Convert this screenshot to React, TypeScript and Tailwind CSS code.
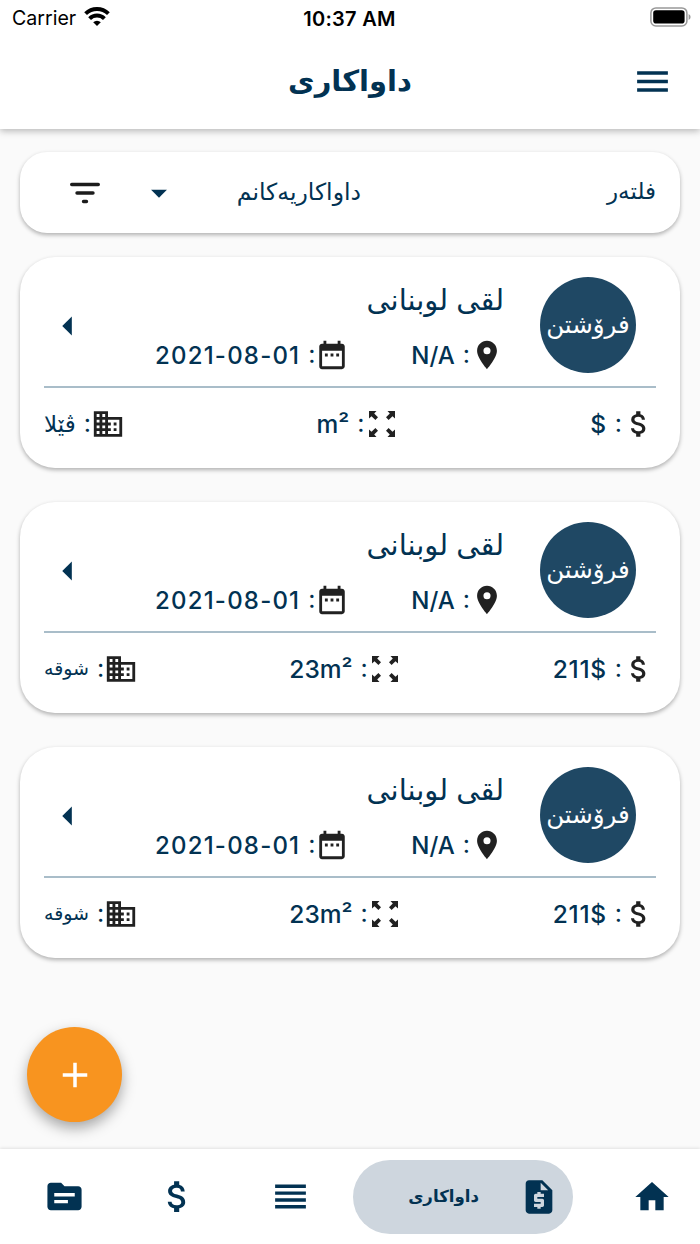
import clsx from 'clsx'
import {
    MdAdd,
    MdArrowDropDown,
    MdArrowLeft,
    MdAttachMoney,
    MdBusiness,
    MdDateRange,
    MdHome,
    MdLocationOn,
    MdMenu,
    MdReorder,
    MdRequestQuote,
    MdSource,
} from 'react-icons/md'

const requests = [
    { price: '$', area: 'm²', kind: 'ڤێلا', kindClass: 'text-[23px]' },
    { price: '211$', area: '23m²', kind: 'شوقە', kindClass: 'text-[19px]' },
    { price: '211$', area: '23m²', kind: 'شوقە', kindClass: 'text-[19px]' },
]

function StatusBar() {
    return (
        <div className="grid h-9 grid-cols-3 items-center pr-[9px] pl-3 text-[20px] text-black">
            <div className="flex items-center gap-2">
                <span className="pt-0.5 text-[19.6px]">Carrier</span>
                <svg viewBox="0 0 26 19" className="mb-[3px] h-[19px] w-[26px]" fill="none" stroke="currentColor" strokeWidth="4">
                    <path d="M1.6 6.6a16.5 16.5 0 0 1 22.8 0" />
                    <path d="M5.6 11.6a10.6 10.6 0 0 1 14.8 0" />
                    <path d="M13 19l-3.8-3.8a5.4 5.4 0 0 1 7.6 0z" fill="currentColor" stroke="none" />
                </svg>
            </div>
            <div className="pt-px pr-1 text-center font-semibold tracking-[0.3px]">10:37 AM</div>
            <svg viewBox="0 0 41 20" className="mb-0.5 h-5 w-[41px] justify-self-end">
                <rect x="0.9" y="0.9" width="36" height="18" rx="5" fill="none" stroke="#999" strokeWidth="1.5" />
                <rect x="3.2" y="3.2" width="31.4" height="13.4" rx="2.8" />
                <path d="M38.6 7v6q2-1 2-3t-2-3z" fill="#999" />
            </svg>
        </div>
    )
}

function ExpandIcon() {
    return (
        <svg viewBox="0 0 26 26" className="mx-1 size-[26px] text-[#212121]" fill="currentColor">
            <path d="M0 0h7.5L5.2 2.5 9 6.3 6.4 9 2.5 5.2 0 7.5z" />
            <path d="M26 0v7.5l-2.5-2.3L19.6 9 17 6.3l3.8-3.8L18.5 0z" />
            <path d="M0 26v-7.5l2.5 2.3L6.4 17 9 19.7l-3.8 3.8L7.5 26z" />
            <path d="M26 26h-7.5l2.3-2.5L17 19.700l2.600-2.700 3.900 3.800 2.500-2.300z" />
        </svg>
    )
}

function RequestCard({ price, area, kind, kindClass }: (typeof requests)[number]) {
    return (
        <article className="h-[211px] rounded-[35px] bg-white px-6 pt-5 shadow-[0_2px_4px_rgba(0,0,0,0.3)]">
            <div className="flex h-[109px]">
                <div className="mr-5 flex size-[96px] shrink-0 items-center justify-center rounded-full bg-[#1f4864] pb-0.5 text-[24.5px] text-white">
                    فرۆشتن
                </div>
                <div className="mr-9 flex w-[349px] flex-col">
                    <h2 className="h-[60px] text-[29px] leading-[46px]">لقی لوبنانی</h2>
                    <div className="flex h-9 items-center justify-between text-[25px]">
                        <div className="flex items-center">
                            <MdLocationOn className="size-[34px] text-[#212121]" />
                            <span>:</span>
                            <span dir="ltr" className="mt-0.5 mr-2 text-[24px] font-[450]">N/A</span>
                        </div>
                        <div className="flex items-center">
                            <MdDateRange className="size-[34px] text-[#212121]" />
                            <span>:</span>
                            <span dir="ltr" className="mt-0.5 mr-2 text-[24px] font-[450] tracking-[1.2px]">2021-08-01</span>
                        </div>
                    </div>
                </div>
                <MdArrowLeft className="mt-[26px] mr-auto ml-px size-[46px]" />
            </div>
            <div className="h-0.5 bg-[#a9bdc9]" />
            <div className="flex h-[72px] items-center justify-between text-[25px]">
                <div className="flex items-center">
                    <MdAttachMoney className="size-[34px] text-[#212121]" />
                    <span>:</span>
                    <span dir="ltr" className="mt-px mr-2 text-[24.5px] font-[450] tracking-[0.7px]">{price}</span>
                </div>
                <div className="flex items-center">
                    <ExpandIcon />
                    <span>:</span>
                    <span dir="ltr" className="mt-px mr-2 text-[24.5px] font-[450]">{area}</span>
                </div>
                <div className="flex items-center">
                    <MdBusiness className="size-[34px] text-[#212121]" />
                    <span>:</span>
                    <span className={clsx('mr-2', kindClass)}>{kind}</span>
                </div>
            </div>
        </article>
    )
}

export default function App() {
    return (
        <div dir="rtl" className="flex h-[1244px] w-[700px] flex-col overflow-hidden bg-[#fafafa] font-['Inter','DejaVu_Sans',sans-serif] text-[#023252]">
            <header className="z-10 h-[129px] shrink-0 bg-white shadow-[0_2px_7px_rgba(0,0,0,0.28)]">
                <div dir="ltr">
                    <StatusBar />
                </div>
                <div className="grid h-[91px] grid-cols-3 items-center px-[27px]">
                    <MdMenu className="size-[41px]" />
                    <h1 className="pb-0.5 text-center text-[29px] font-bold">داواکاری</h1>
                </div>
            </header>

            <main className="flex flex-1 flex-col px-5 pt-[23px]">
                <div className="flex h-[81px] shrink-0 items-center rounded-[27px] bg-white px-6 shadow-[0_2px_4px_rgba(0,0,0,0.3)]">
                    <span className="w-[295px] pb-0.5 text-[23px]">فلتەر</span>
                    <span className="w-[183px] pb-0.5 text-[23.5px]">داواکاریەکانم</span>
                    <MdArrowDropDown className="size-[38px]" />
                    <svg viewBox="0 0 30 22" className="mr-10 h-[22px] w-[30px]" fill="none" stroke="#1c1c1c" strokeWidth="3.4" strokeLinecap="round">
                        <path d="M1.7 2.5h26.6M7 11h16M13.5 19.5h3" />
                    </svg>
                </div>
                <div className="mt-6 flex flex-col gap-[34px]">
                    {requests.map((request, i) => (
                        <RequestCard key={i} {...request} />
                    ))}
                </div>
                <button className="mt-[69px] mr-auto ml-[7px] flex size-[95px] shrink-0 items-center justify-center rounded-full bg-[#f8941f] text-white shadow-[0_6px_14px_rgba(0,0,0,0.34)]">
                    <MdAdd className="size-[42px]" />
                </button>
            </main>

            <nav className="flex h-[95px] shrink-0 items-center bg-white shadow-[0_-1px_3px_rgba(0,0,0,0.1)]">
                <MdHome className="mr-7 size-10" />
                <div className="mr-[59px] flex h-[74px] w-[220px] items-center rounded-full bg-[#ced6de] pr-3.5">
                    <MdRequestQuote className="size-10" />
                    <span className="mr-10 text-[16.6px] font-bold">داواکاری</span>
                </div>
                <MdReorder className="mr-[42px] size-[41px]" />
                <MdAttachMoney className="mr-[72px] size-[41px]" />
                <MdSource className="mr-[72px] size-[41px]" />
            </nav>
        </div>
    )
}
